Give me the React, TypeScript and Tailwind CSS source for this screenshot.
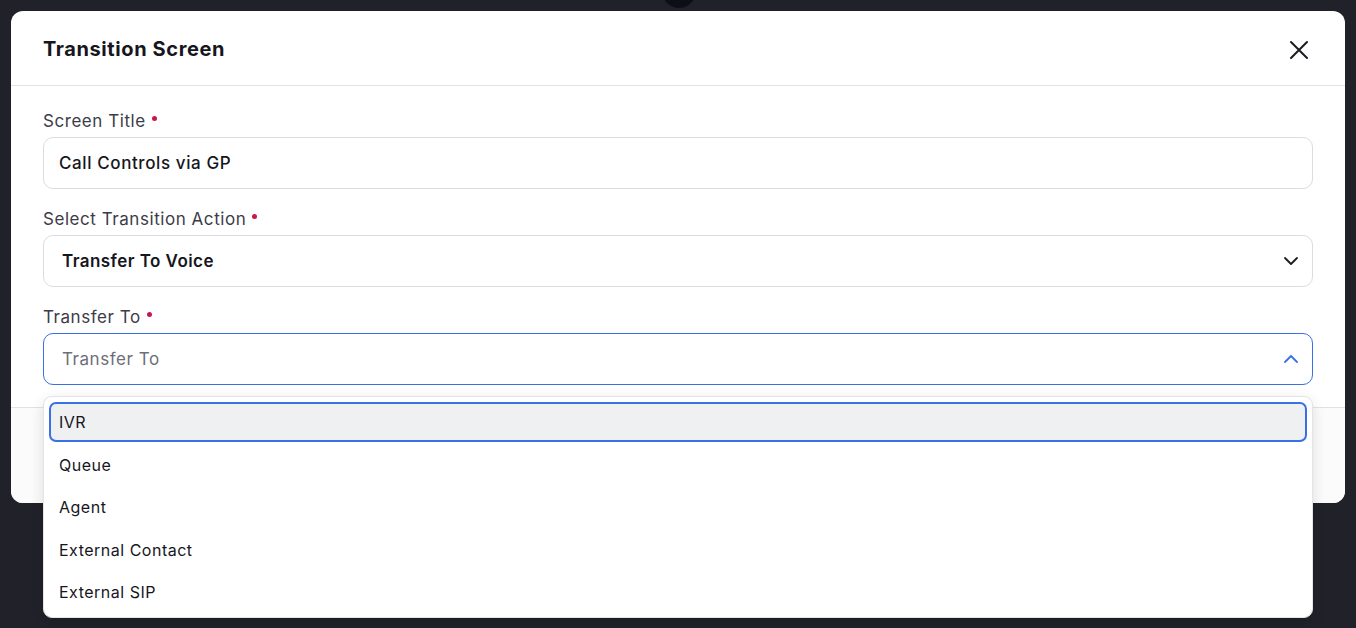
import { useState } from "react";

const options = ["IVR", "Queue", "Agent", "External Contact", "External SIP"];

const Required = () => (
  <span className="inline-block w-[5px] h-[5px] rounded-full bg-[#c8174f] ml-[6px] mb-[8px]"></span>
);

const Label = ({ text }: { text: string }) => (
  <div className="flex items-center h-[26px] pt-[2px] text-[17px] tracking-[0.55px] text-[#3c3c48] mb-[3px]">
    {text}
    <Required />
  </div>
);

const Chevron = ({ up, color }: { up?: boolean; color: string }) => (
  <svg width="16" height="10" viewBox="0 0 16 10" fill="none">
    <polyline
      points={up ? "2,8 8,2 14,8" : "2,2 8,8 14,2"}
      stroke={color}
      strokeWidth="1.8"
      strokeLinecap="round"
      strokeLinejoin="round"
    />
  </svg>
);

const App = () => {
  const [active] = useState(0);

  return (
    <div className="relative w-[1356px] h-[628px] overflow-hidden bg-[#21212a] font-['Inter',sans-serif]">
      {/* bit of the page peeking behind the modal */}
      <div className="absolute left-[662px] top-[-26px] w-[34px] h-[34px] rounded-full bg-[#0e0e16]"></div>

      <div className="relative pt-[11px] pl-[11px]">
        <div className="w-[1334px] rounded-[12px] bg-white overflow-visible">
          <div className="flex items-center justify-between h-[75px] px-[32px] border-b border-[#e2e2e6]">
            <h2 className="text-[20px] font-bold text-[#16161d] tracking-[0.6px] mt-[2px]">
              Transition Screen
            </h2>
            <svg width="20" height="20" viewBox="0 0 20 20" fill="none" className="mr-[4px] mt-[4px]">
              <path d="M2 2 L18 18 M18 2 L2 18" stroke="#1b1b22" strokeWidth="2" strokeLinecap="round" />
            </svg>
          </div>

          <div className="px-[32px] pt-[22px] pb-[22px] border-b border-[#e2e2e6]">
            <Label text="Screen Title" />
            <div className="flex items-center h-[52px] px-[15px] pt-[1px] rounded-[10px] border border-[#dcdce0] text-[17px] tracking-[0.6px] font-medium text-[#16161d]">
              Call Controls via GP
            </div>

            <div className="mt-[17px]">
              <Label text="Select Transition Action" />
              <div className="flex items-center justify-between h-[52px] pl-[18px] pr-[13px] rounded-[10px] border border-[#dcdce0] text-[17px] tracking-[0.45px] font-semibold text-[#16161d]">
                <span className="pt-[1px]">Transfer To Voice</span>
                <Chevron color="#1b1b22" />
              </div>
            </div>

            <div className="relative mt-[17px]">
              <Label text="Transfer To" />
              <div className="flex items-center justify-between h-[52px] pl-[18px] pr-[13px] rounded-[10px] border border-[#3b6fe6] text-[17px] tracking-[0.55px] text-[#6e6e78]">
                <span className="pt-[2px]">Transfer To</span>
                <Chevron up color="#3b6fe6" />
              </div>

              <div className="absolute left-0 right-0 top-[92px] z-10 rounded-[9px] bg-white border border-[#e4e4e8] shadow-[0_4px_14px_rgba(0,0,0,0.12)] px-[5px] py-[5px] flex flex-col gap-[2.5px]">
                {options.map((opt, index) => (
                  <div
                    key={index}
                    className={
                      index === active
                        ? "flex items-center h-[40px] px-[8px] rounded-[7px] border-2 border-[#3b6fe6] bg-[#eef0f2] text-[16px] tracking-[0.5px] text-[#16161d]"
                        : "flex items-center h-[40px] px-[10px] text-[16px] tracking-[0.5px] text-[#16161d]"
                    }
                  >
                    {opt}
                  </div>
                ))}
              </div>
            </div>
          </div>

          <div className="h-[95px] rounded-b-[12px] bg-[#fbfbfc]"></div>
        </div>
      </div>
    </div>
  );
};

export default App;
